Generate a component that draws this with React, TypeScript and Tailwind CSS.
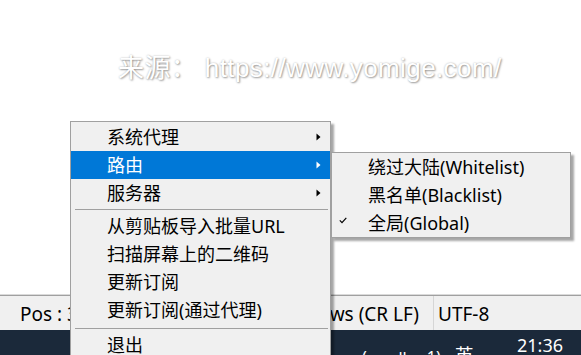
import React from "react";

const Arrow = ({ white }: { white?: boolean }) => (
  <svg width="5" height="8" viewBox="0 0 5 8" className="shrink-0">
    <polygon points="0.5,0.5 4.5,4 0.5,7.5" fill={white ? "#ffffff" : "#000000"} />
  </svg>
);

const Check = () => (
  <svg width="8" height="7" viewBox="0 0 8 7">
    <path d="M0.8 3.4 L3 5.6 L7.3 0.9" stroke="#000" strokeWidth="1.2" fill="none" />
  </svg>
);

const menuFont = { fontFamily: '"Noto Sans", "Noto Sans CJK SC", sans-serif' };

function Row({ label, arrow, active, check }: { label: string; arrow?: boolean; active?: boolean; check?: boolean }) {
  return (
    <div
      className={
        "h-[28px] flex items-center pl-[7px] pr-[9px] text-[18px] leading-none " +
        (active ? "bg-[#0078d7] text-white" : "text-black")
      }
    >
      <div className="w-[29px] h-full flex items-center pb-[5px]">{check ? <Check /> : null}</div>
      <div className="whitespace-nowrap">{label}</div>
      {arrow ? (
        <div className="ml-auto flex items-center">
          <Arrow white={active} />
        </div>
      ) : null}
    </div>
  );
}

const Sep = ({ top, h }: { top: string; h: string }) => (
  <div className={h + " " + top}>
    <div className="h-px ml-[4px] mr-[2px] bg-[#a0a0a0]" />
  </div>
);

export default function App() {
  return (
    <div className="relative w-[581px] h-[355px] overflow-hidden bg-white flex flex-col">
      <div className="h-[294px] pt-[53px] pl-[118px]">
        <div
          className="text-[26px] leading-[30px] tracking-[0.4px] text-white whitespace-nowrap [text-shadow:1px_1px_2px_rgba(0,0,0,0.35),0_0_2px_rgba(0,0,0,0.25)]"
          style={{ fontFamily: '"Liberation Sans", "Noto Sans CJK SC", sans-serif' }}
        >
          来源： https://www.yomige.com/
        </div>
      </div>
      <div className="h-px bg-[#dadada]" />
      <div className="h-px bg-[#a0a0a0]" />
      <div
        className="h-[34px] bg-[#f0f0f0] flex items-center pt-[2px] text-[19px] text-black whitespace-nowrap"
        style={{ fontFamily: '"Noto Sans", sans-serif' }}
      >
        <div className="w-[240px] pl-[20px]">Pos : 3</div>
        <div className="w-[193px] pr-[14px] text-right">Windows (CR LF)</div>
        <div className="self-stretch w-px bg-[#d6d6d6] -mt-[2px]" />
        <div className="pl-[4px]">UTF-8</div>
      </div>
      <div
        className="h-[25px] bg-[#1b293a] flex text-white whitespace-nowrap"
        style={{ fontFamily: '"Noto Sans", "Noto Sans CJK SC", sans-serif' }}
      >
        <div className="ml-[362px] pt-[19px] text-[16px] leading-none">(</div>
        <div className="ml-[10px] pt-[20px] text-[16px] leading-none">s</div>
        <div className="ml-[14px] pt-[20px] text-[16px] leading-none">ll</div>
        <div className="ml-[20px] pt-[19px] text-[16px] leading-none">1)</div>
        <div className="ml-[14px] pt-[17px] text-[19px] leading-none">英</div>
        <div className="ml-auto mr-[18px] pt-[6px] text-[18px] leading-none">21:36</div>
      </div>

      <div
        className="absolute left-[70px] top-[121px] w-[261px] h-[250px] bg-[#f0f0f0] border border-[#a0a0a0] pt-[1px] shadow-[3px_3px_2px_rgba(0,0,0,0.35)]"
        style={menuFont}
      >
        <Row label="系统代理" arrow />
        <Row label="路由" arrow active />
        <Row label="服务器" arrow />
        <Sep h="h-[5px]" top="pt-[2px]" />
        <Row label="从剪贴板导入批量URL" />
        <Row label="扫描屏幕上的二维码" />
        <Row label="更新订阅" />
        <Row label="更新订阅(通过代理)" />
        <Sep h="h-[7px]" top="pt-[4px]" />
        <Row label="退出" />
      </div>

      <div
        className="absolute left-[331px] top-[152px] w-[240px] bg-[#f0f0f0] border border-[#a0a0a0] shadow-[3px_3px_2px_rgba(0,0,0,0.35)]"
        style={menuFont}
      >
        <Row label="绕过大陆(Whitelist)" />
        <Row label="黑名单(Blacklist)" />
        <Row label="全局(Global)" check />
      </div>
    </div>
  );
}
